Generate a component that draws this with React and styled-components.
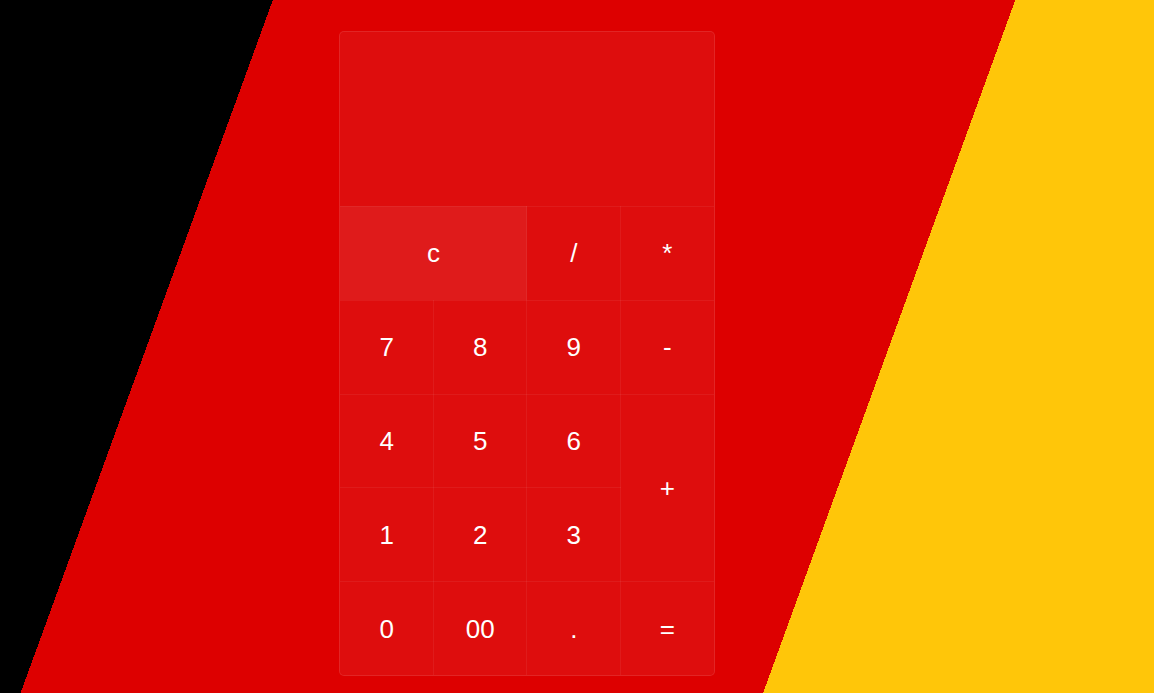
import styled, { createGlobalStyle } from 'styled-components';

const GlobalStyle = createGlobalStyle`
  *, *::before, *::after {
    box-sizing: border-box;
  }

  html, body {
    margin: 0;
    padding: 0;
    height: 100%;
  }

  body {
    background: linear-gradient(
      110deg,
      #000000 19.4%,
      #dd0000 19.4%,
      #dd0000 72.2%,
      #ffc609 72.2%
    );
    font-family: 'Liberation Sans', Arial, sans-serif;
    overflow: hidden;
  }
`;

const Page = styled.div`
  height: 693px;
  padding: 31px 0 0 339px;
  display: flex;
  align-items: flex-start;
`;

const Calculator = styled.div`
  width: 376px;
  background-color: rgba(255, 255, 255, 0.05);
  border: 1px solid rgba(255, 255, 255, 0.1);
  border-radius: 5px;
  overflow: hidden;
  display: flex;
  flex-direction: column;
`;

const Display = styled.div`
  height: 174px;
  color: #fff;
  font-size: 40px;
  display: flex;
  align-items: flex-end;
  justify-content: flex-end;
  padding: 0 20px 16px;
`;

const Keys = styled.div`
  display: grid;
  grid-template-columns: repeat(4, 1fr);
  grid-auto-rows: 93.8px;
`;

const Key = styled.button`
  grid-column: span ${({ $wide }) => ($wide ? 2 : 1)};
  grid-row: span ${({ $tall }) => ($tall ? 2 : 1)};
  background-color: ${({ $light }) =>
    $light ? 'rgba(255, 255, 255, 0.06)' : 'transparent'};
  border: none;
  border-top: 1px solid rgba(255, 255, 255, 0.06);
  border-left: 1px solid rgba(255, 255, 255, 0.06);
  margin-left: -1px;
  color: #fff;
  font-family: 'Liberation Sans', Arial, sans-serif;
  font-size: 26px;
  padding: 1px 0 0;
  cursor: pointer;
  display: flex;
  align-items: center;
  justify-content: center;
`;

const keys = [
  { label: 'c', wide: true, light: true },
  { label: '/' },
  { label: '*' },
  { label: '7' },
  { label: '8' },
  { label: '9' },
  { label: '-' },
  { label: '4' },
  { label: '5' },
  { label: '6' },
  { label: '+', tall: true },
  { label: '1' },
  { label: '2' },
  { label: '3' },
  { label: '0' },
  { label: '00' },
  { label: '.' },
  { label: '=' }
];

const App = () => {
  return (
    <>
      <GlobalStyle />
      <Page>
        <Calculator>
          <Display />
          <Keys>
            {keys.map((k) => (
              <Key key={k.label} $wide={k.wide} $tall={k.tall} $light={k.light}>
                {k.label}
              </Key>
            ))}
          </Keys>
        </Calculator>
      </Page>
    </>
  );
};

export default App;
